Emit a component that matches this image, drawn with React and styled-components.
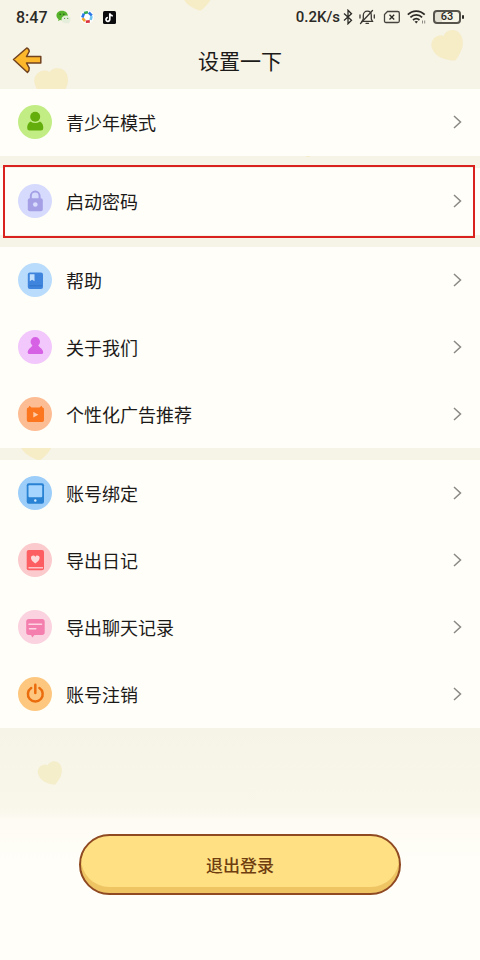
import React from "react";
import styled, { createGlobalStyle } from "styled-components";

const GlobalStyle = createGlobalStyle`
  * {
    box-sizing: border-box;
  }
  body {
    margin: 0;
    background: #fffef8;
    font-family: "Noto Sans CJK SC", sans-serif;
    color: #1c1a18;
  }
`;

const Page = styled.div`
  position: relative;
  min-height: 100vh;
  overflow: hidden;
  display: flex;
  flex-direction: column;
  background: #f6f3e7;
`;

const Decor = styled.svg`
  position: absolute;
  top: ${props => props.$top}px;
  left: ${props => props.$left}%;
  width: ${props => props.$size}px;
  height: ${props => props.$size}px;
  transform: rotate(${props => props.$turn}deg);
  fill: ${props => props.$color || "#f6ecc6"};
  pointer-events: none;
`;

const StatusBar = styled.div`
  position: relative;
  display: flex;
  align-items: center;
  justify-content: space-between;
  height: 34px;
  padding: 0 16px;
  font-family: Roboto, sans-serif;
  font-weight: 500;
  color: #2b2a26;
`;

const StatusGroup = styled.div`
  display: flex;
  align-items: center;
  gap: ${props => props.$gap}px;
`;

const Time = styled.span`
  font-size: 16px;
`;

const Speed = styled.span`
  font-size: 15px;
`;

const SystemIcons = styled.div`
  display: flex;
  align-items: center;
  gap: 6px;
`;

const Battery = styled.div`
  display: flex;
  align-items: center;
  gap: 1px;
  &:after {
    content: "";
    width: 2px;
    height: 4px;
    border-radius: 1px;
    background: #2b2a26;
  }
`;

const BatteryBody = styled.span`
  width: 28px;
  height: 14px;
  border: 2px solid #55534c;
  border-radius: 4px;
  background: linear-gradient(to right, #e2dfd3 30%, transparent 30%);
  font-size: 11px;
  line-height: 10px;
  text-align: center;
`;

const Header = styled.header`
  position: relative;
  display: grid;
  grid-template-columns: 40px 1fr 40px;
  align-items: center;
  height: 55px;
  padding: 0 8px 4px;
`;

const BackButton = styled.button`
  display: flex;
  padding: 0 4px;
  border: 0;
  background: none;
  cursor: pointer;
`;

const Title = styled.h1`
  margin: 0;
  font-size: 21px;
  font-weight: 400;
  line-height: 32px;
  text-align: center;
`;

const Groups = styled.main`
  position: relative;
  display: flex;
  flex-direction: column;
  gap: 12px;
`;

const Group = styled.nav`
  position: relative;
  background: #fffef8;
`;

const Highlight = styled.div`
  position: absolute;
  inset: -3px 5px -3px 3px;
  border: 2px solid #d9221e;
  pointer-events: none;
`;

const Row = styled.a`
  display: flex;
  align-items: center;
  gap: 14px;
  height: 67px;
  padding: 0 18px 1px;
  color: inherit;
  text-decoration: none;
`;

const Badge = styled.svg`
  flex: none;
  width: 34px;
  height: 34px;
  border-radius: 50%;
  background: ${props => props.$bg};
`;

const Label = styled.span`
  flex: 1;
  font-size: 18px;
  line-height: 28px;
`;

const Chevron = styled.svg`
  width: 9px;
  height: 14px;
  fill: none;
  stroke: #8b8983;
  stroke-width: 1.5;
`;

const Footer = styled.footer`
  flex: 1;
  display: flex;
  justify-content: center;
  align-items: flex-start;
  padding: 106px 0 65px;
  background: linear-gradient(#f6f3e7, #f9f6ea 80px, #fdfbf3 92px, #fffef8 136px);
`;

const LogoutButton = styled.button`
  width: 67%;
  height: 61px;
  border: 2px solid #8f4a22;
  border-radius: 31px;
  background: #ffe184;
  box-shadow: inset 0 -6px 0 #efc564;
  font-family: inherit;
  font-size: 17px;
  font-weight: 500;
  color: #6e3d10;
  cursor: pointer;
`;

const HEART =
  "M16 30C13 29 9 26 5 22C2 18 1 15 1 11C1 6 5 2 10 2C13 2 15 3 16 4.500C17 3 19 2 22 2C27 2 31 6 31 11C31 15 30 18 27 22C23 26 19 29 16 30Z";

const Heart = props => (
  <Decor viewBox="0 0 32 32" aria-hidden="true" {...props}>
    <path d={HEART} />
  </Decor>
);

const WeChatIcon = () => (
  <svg width="15" height="15" viewBox="0 0 14 14">
    <path
      d="M5.7.8C2.7.8.4 2.7.4 5.2c0 1.4.8 2.6 2 3.4l-.5 1.7 2-1c.6.2 1.2.2 1.8.2 3 0 5.3-1.9 5.3-4.3S8.700.8 5.700.8z"
      fill="#57b32c"
    />
    <path
      d="M9.400 5.200c-2.500 0-4.300 1.600-4.300 3.600s1.900 3.600 4.300 3.600c.5 0 1-.1 1.500-.2l1.400.8-.4-1.300c1-.7 1.700-1.700 1.700-2.900 0-2-1.900-3.600-4.200-3.600z"
      fill="#e4eedb"
    />
    <circle cx="3.900" cy="4" r=".7" fill="#23551a" />
    <circle cx="7.300" cy="4" r=".7" fill="#23551a" />
    <circle cx="8" cy="7.900" r=".6" fill="#68a04c" />
    <circle cx="10.900" cy="7.900" r=".6" fill="#68a04c" />
  </svg>
);

const PinwheelIcon = () => (
  <svg width="14" height="14" viewBox="0 0 14 14">
    <circle cx="7" cy="7" r="6.800" fill="#fff" />
    <g fill="none" strokeWidth="2.600">
      <path d="M4 3L8 2.300" stroke="#35a853" />
      <path d="M8.800 2.500L11.800 5.600" stroke="#2b77e5" />
      <path d="M11.600 6.200L10.600 10" stroke="#6ec5ef" />
      <path d="M9.800 11.400L5.800 11.700" stroke="#d92f3b" />
      <path d="M5 11.200L2.500 8.200" stroke="#f0a52b" />
      <path d="M2.300 7.400L3.900 3.600" stroke="#2b77e5" />
    </g>
  </svg>
);

const TikTokIcon = () => (
  <svg width="13" height="13" viewBox="0 0 13 13">
    <rect width="13" height="13" rx="1.500" fill="#0b0a0c" />
    <path
      d="M6.800 2.300V8.300A1.900 1.900 0 1 1 4.900 6.500M6.800 2.600C7.200 4 8.200 4.800 9.800 4.900"
      fill="none"
      stroke="#fff"
      strokeWidth="1.700"
    />
  </svg>
);

const BluetoothIcon = () => (
  <svg width="10" height="16" viewBox="0 0 10 16">
    <path
      d="M1 4.500L8.500 11.300L5 14.800V1.200L8.500 4.700L1 11.500"
      fill="none"
      stroke="#2b2a26"
      strokeWidth="1.300"
    />
  </svg>
);

const MutedIcon = () => (
  <svg width="18" height="16" viewBox="0 0 18 16">
    <g fill="none" stroke="#3a3833" strokeWidth="1.300" strokeLinecap="round">
      <path d="M3 12.300H13.500L12.300 10V6.500C12.300 4 10.600 2.200 8.300 2.200S4.300 4 4.300 6.500V10L3 12.300Z" />
      <path d="M7 14.300H9.500M13.500 1.500L1.500 14.500M1 6V9M15.300 6V9" />
    </g>
  </svg>
);

const NoSimIcon = () => (
  <svg width="18" height="14" viewBox="0 0 18 14">
    <path
      d="M4.500 1.500H14.800Q16.300 1.500 16.300 3V11Q16.300 12.500 14.800 12.500H3Q1.500 12.500 1.500 11V4.500Z"
      fill="none"
      stroke="#45433d"
      strokeWidth="1.300"
    />
    <path d="M6.500 4.800L11.200 9.500M11.200 4.800L6.500 9.500" stroke="#2b2a26" strokeWidth="1.300" />
  </svg>
);

const WifiIcon = () => (
  <svg width="20" height="16" viewBox="0 0 20 16">
    <g fill="none" stroke="#2b2a26" strokeWidth="1.700">
      <path d="M.8 5.700C5.500 .9 13 .9 17.700 5.700" />
      <path d="M3.400 8.400C6.700 5.100 11.800 5.100 15.100 8.400" />
      <path d="M6 11C8 9.200 10.500 9.200 12.500 11" />
    </g>
    <path d="M7.500 12.600C8.600 11.700 9.900 11.700 11 12.600L9.250 14.600Z" fill="#2b2a26" />
    <path d="M15.500 11.500V14.500M17.700 11.500V14.500" stroke="#8b8983" />
  </svg>
);

const BackArrow = () => (
  <svg width="30" height="28" viewBox="0 0 30 28">
    <path
      d="M1.500 13.500L14.800 2Q17.200 3 17.200 5.500L14.500 10.500H28.800V17H14.500L17.200 21.800Q17.500 25 15.500 26.500Z"
      fill="#fdb72b"
      stroke="#71431f"
      strokeWidth="1.500"
      strokeLinejoin="round"
    />
  </svg>
);

const icons = {
  teen: (
    <g fill="#63ad0c">
      <circle cx="17.200" cy="11.800" r="5" />
      <path d="M12.500 16.500Q17.200 19.500 22 16.500C24.500 18 25.300 20 25.300 23Q25.300 25.500 23 25.500H11.500Q9.200 25.500 9.200 23C9.200 20 10 18 12.500 16.500Z" />
    </g>
  ),
  lock: (
    <g>
      <path d="M12.800 15V12A4.400 4.400 0 0 1 21.600 12V15" fill="none" stroke="#a5a0e6" strokeWidth="2" />
      <rect x="9.800" y="14.300" width="15" height="13" rx="2" fill="#a5a0e6" />
      <circle cx="17.300" cy="20.500" r="2.300" fill="#dadcfd" />
    </g>
  ),
  help: (
    <g>
      <rect x="9.800" y="9.500" width="15.200" height="16.500" rx="2" fill="#4085dd" />
      <path d="M11.800 11.300H16.500V18.300L14.100 16.800L11.800 18.300Z" fill="#c3e1ff" />
      <path d="M11.500 22.800H24" stroke="#2f74c9" />
    </g>
  ),
  about: (
    <g fill="#d661e5">
      <circle cx="17.300" cy="11.700" r="4.700" />
      <path d="M15 14H19.700C20 17 25.200 18.500 25.200 22.500Q25.200 24 23.500 24H11.500Q9.700 24 9.700 22.500C9.700 18.500 14.700 17 15 14Z" />
    </g>
  ),
  ads: (
    <g>
      <path
        d="M10.500 10.500L11.500 8.700L13.500 10.500H21.500L23.500 8.700L24.500 10.500Q26 10.800 26 12.300V23.300Q26 25 24.300 25H10.500Q8.800 25 8.800 23.300V12.300Q8.800 10.800 10.500 10.500Z"
        fill="#fb761e"
      />
      <path d="M15.300 14.800L20.300 17.700L15.300 20.600Z" fill="#ffcba8" />
    </g>
  ),
  bind: (
    <g>
      <rect x="8.700" y="7.300" width="17.300" height="20.500" rx="2" fill="#2982d3" />
      <rect x="10.500" y="9.200" width="13.700" height="12" rx="1" fill="#a6d5ff" />
      <circle cx="17.300" cy="24.500" r="1.200" fill="#d6ecff" />
    </g>
  ),
  diary: (
    <g>
      <rect x="8.700" y="7" width="17.300" height="20.300" rx="2" fill="#fc5e62" />
      <path
        d="M17.300 20.500C14.500 18.600 13 17 13 14.800C13 12.500 16.300 11.700 17.300 14C18.300 11.700 21.600 12.500 21.600 14.800C21.600 17 20.100 18.600 17.300 20.500Z"
        fill="#ffdadb"
      />
      <path d="M10.500 24.800H25" stroke="#ffc3c8" strokeWidth="1.400" />
    </g>
  ),
  chat: (
    <g>
      <path
        d="M11 9H24Q26.700 9 26.700 11.700V22.300Q26.700 25 24 25H16.500L14.300 27.500L13 25H11Q8.200 25 8.200 22.300V11.700Q8.200 9 11 9Z"
        fill="#f47eae"
      />
      <path d="M11 14.300H23.500M11.500 18.800H17.800" stroke="#ffd5e3" strokeWidth="1.600" strokeLinecap="round" />
    </g>
  ),
  power: (
    <g fill="none" stroke="#ea6c0c" strokeWidth="2.500" strokeLinecap="round">
      <path d="M13.200 11A7.400 7.400 0 1 0 21.400 11" />
      <path d="M17.300 7.800V16" />
    </g>
  )
};

const groups = [
  [{ icon: "teen", bg: "#c2ed85", text: "青少年模式" }],
  [{ icon: "lock", bg: "#d6dafd", text: "启动密码", highlighted: true }],
  [
    { icon: "help", bg: "#b9dcfc", text: "帮助" },
    { icon: "about", bg: "#f2c7fb", text: "关于我们" },
    { icon: "ads", bg: "#fdbd94", text: "个性化广告推荐" }
  ],
  [
    { icon: "bind", bg: "#9dcefa", text: "账号绑定" },
    { icon: "diary", bg: "#fbcacd", text: "导出日记" },
    { icon: "chat", bg: "#fbd2df", text: "导出聊天记录" },
    { icon: "power", bg: "#fdc780", text: "账号注销" }
  ]
];

const SettingRow = ({ icon, bg, text }) => (
  <Row href="#">
    <Badge viewBox="0 0 34 34" $bg={bg} aria-hidden="true">
      {icons[icon]}
    </Badge>
    <Label>{text}</Label>
    <Chevron viewBox="0 0 9 14" aria-hidden="true">
      <path d="M1 1L7.500 7L1 13" />
    </Chevron>
  </Row>
);

const App = () => (
  <Page>
    <GlobalStyle />
    <Heart $top={-19} $left={38} $size={32} $turn={-10} />
    <Heart $top={67} $left={7} $size={36} $turn={-10} />
    <Heart $top={30} $left={90} $size={34} $turn={-25} />
    <Heart $top={129} $left={61} $size={30} $turn={0} />
    <Heart $top={427} $left={4} $size={36} $turn={-10} />
    <StatusBar>
      <StatusGroup $gap={8}>
        <Time>8:47</Time>
        <StatusGroup $gap={9}>
          <WeChatIcon />
          <PinwheelIcon />
          <TikTokIcon />
        </StatusGroup>
      </StatusGroup>
      <StatusGroup $gap={3}>
        <Speed>0.2K/s</Speed>
        <SystemIcons>
          <BluetoothIcon />
          <MutedIcon />
          <NoSimIcon />
          <WifiIcon />
          <Battery>
            <BatteryBody>63</BatteryBody>
          </Battery>
        </SystemIcons>
      </StatusGroup>
    </StatusBar>
    <Header>
      <BackButton aria-label="返回">
        <BackArrow />
      </BackButton>
      <Title>设置一下</Title>
    </Header>
    <Groups>
      {groups.map(rows => (
        <Group key={rows[0].icon}>
          {rows.map(row => (
            <SettingRow key={row.icon} {...row} />
          ))}
          {rows[0].highlighted && <Highlight />}
        </Group>
      ))}
    </Groups>
    <Footer>
      <LogoutButton>退出登录</LogoutButton>
    </Footer>
    <Heart $top={761} $left={8} $size={26} $turn={-20} $color="#f5eecb" />
  </Page>
);

export default App;
